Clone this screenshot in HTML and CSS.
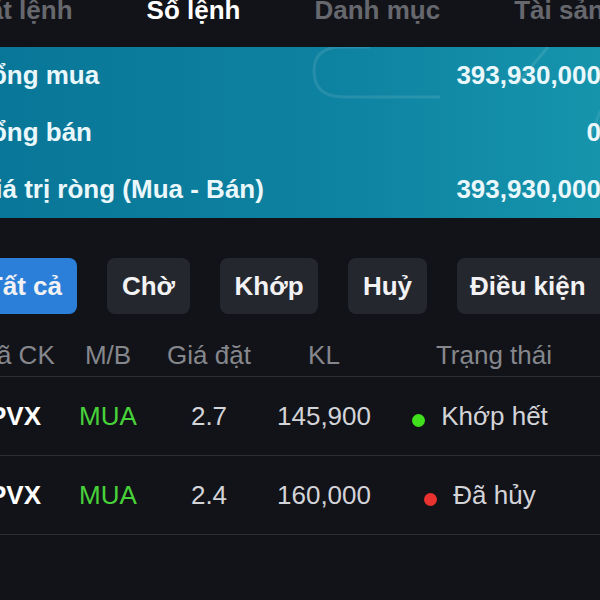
FILE: index.html
```html
<!DOCTYPE html>
<html>
<head>
    <title>Sổ lệnh</title>
    <link rel="stylesheet" href="styles.css">
</head>
<body>
    <div class="screen">
        <div class="tabs">
            <span class="tab">Đặt lệnh</span>
            <span class="tab active">Sổ lệnh</span>
            <span class="tab">Danh mục</span>
            <span class="tab">Tài sản</span>
        </div>

        <div class="summary">
            <svg class="summary-deco" width="680" height="171" viewBox="0 0 680 171">
                <path d="M410 0 L382 0 Q354 0 354 24 Q354 50 384 50 L480 50" fill="none" stroke="#ffffff" stroke-opacity="0.1" stroke-width="3"/>
                <path d="M588 0 L556 38" fill="none" stroke="#ffffff" stroke-opacity="0.1" stroke-width="3"/>
                <path d="M640 64 L630 92" fill="none" stroke="#ffffff" stroke-opacity="0.08" stroke-width="3"/>
            </svg>
            <div class="summary-row">
                <span>Tổng mua</span>
                <span>393,930,000</span>
            </div>
            <div class="summary-row">
                <span>Tổng bán</span>
                <span>0</span>
            </div>
            <div class="summary-row">
                <span>Giá trị ròng (Mua - Bán)</span>
                <span>393,930,000</span>
            </div>
        </div>

        <div class="filters">
            <button class="filter active w-all">Tất cả</button>
            <button class="filter w-wait">Chờ</button>
            <button class="filter w-match">Khớp</button>
            <button class="filter w-cancel">Huỷ</button>
            <button class="filter w-cond">Điều kiện</button>
        </div>

        <div class="orders">
            <div class="order-row head">
                <span class="c-code">Mã CK</span>
                <span class="c-side">M/B</span>
                <span class="c-price">Giá đặt</span>
                <span class="c-qty">KL</span>
                <span class="c-status">Trạng thái</span>
            </div>
            <div class="order-row">
                <span class="c-code code">PVX</span>
                <span class="c-side buy">MUA</span>
                <span class="c-price">2.7</span>
                <span class="c-qty">145,900</span>
                <span class="c-status status"><i class="dot green"></i>Khớp hết</span>
            </div>
            <div class="order-row">
                <span class="c-code code">PVX</span>
                <span class="c-side buy">MUA</span>
                <span class="c-price">2.4</span>
                <span class="c-qty">160,000</span>
                <span class="c-status status"><i class="dot red"></i>Đã hủy</span>
            </div>
        </div>
    </div>
</body>
</html>
```

FILE: styles.css
```css
body {
    margin: 0;
    background: #121318;
    font-family: "Liberation Sans", Arial, sans-serif;
    width: 600px;
    height: 600px;
    overflow: hidden;
}
.screen {
    width: 680px;
    margin-left: -40px;
}

/* top tabs */
.tabs {
    display: flex;
    gap: 74px;
    height: 47px;
    padding-left: 10px;
    font-size: 26px;
    font-weight: 700;
    color: #66686e;
    line-height: 30px;
    overflow: hidden;
}
.tab {
    white-space: nowrap;
    margin-top: -5px;
}
.tab.active {
    color: #ffffff;
}

/* summary panel */
.summary {
    position: relative;
    background: linear-gradient(90deg, #087597 0%, #0e82a1 55%, #1797ae 100%);
    padding: 0 39px 0 15px;
    overflow: hidden;
}
.summary-deco {
    position: absolute;
    left: 0;
    top: 0;
}
.summary-row {
    position: relative;
    display: flex;
    justify-content: space-between;
    align-items: center;
    height: 57px;
    font-size: 26px;
    font-weight: 700;
    color: #eaf7fb;
}

/* filter buttons */
.filters {
    display: flex;
    gap: 30px;
    margin-top: 40px;
    padding-left: 8px;
}
.filter {
    flex: none;
    height: 56px;
    border: 0;
    border-radius: 8px;
    background: #25272e;
    color: #f2f2f4;
    font-family: inherit;
    font-size: 26px;
    font-weight: 700;
    white-space: nowrap;
    padding: 0;
}
.filter.active {
    background: #2b7fd9;
}
.w-all { width: 109px; padding-right: 15px; text-align: right; }
.w-wait { width: 83px; }
.w-match { width: 98px; }
.w-cancel { width: 79px; }
.w-cond { width: 160px; text-align: left; padding-left: 13px; }

/* order table */
.orders {
    margin-top: 21px;
}
.order-row {
    display: grid;
    grid-template-columns: 110px 76px 126px 104px 236px 28px;
    align-items: center;
    height: 78px;
    border-bottom: 1px solid #2c2e34;
    font-size: 26px;
    color: #d3d4d8;
}
.order-row.head {
    height: 41px;
    color: #85878d;
}
.c-code,
.c-side,
.c-price,
.c-qty,
.c-status {
    text-align: center;
}
.code {
    color: #ffffff;
    font-weight: 700;
}
.buy {
    color: #48d23a;
}
.status {
    display: flex;
    justify-content: center;
    align-items: center;
    padding-right: 28px;
}
.dot {
    width: 13px;
    height: 13px;
    border-radius: 50%;
    margin-right: 16px;
    margin-top: 8px;
}
.dot.green {
    background: #41e01c;
}
.dot.red {
    background: #e8322f;
}
```
